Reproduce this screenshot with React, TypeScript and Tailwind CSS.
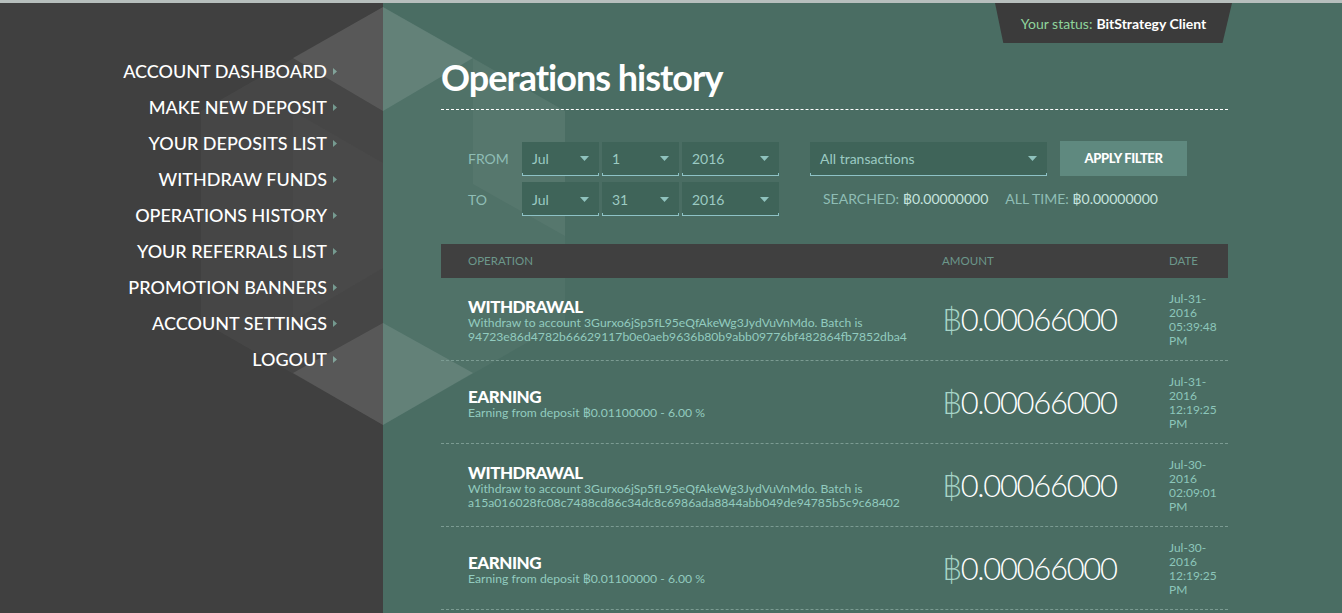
import React from 'react';

const navItems = [
  'ACCOUNT DASHBOARD',
  'MAKE NEW DEPOSIT',
  'YOUR DEPOSITS LIST',
  'WITHDRAW FUNDS',
  'OPERATIONS HISTORY',
  'YOUR REFERRALS LIST',
  'PROMOTION BANNERS',
  'ACCOUNT SETTINGS',
  'LOGOUT',
];

interface Operation {
  type: string;
  description: string;
  amount: string;
  date: string;
}

const operations: Operation[] = [
  {
    type: 'WITHDRAWAL',
    description:
      'Withdraw to account 3Gurxo6jSp5fL95eQfAkeWg3JydVuVnMdo. Batch is 94723e86d4782b66629117b0e0aeb9636b80b9abb09776bf482864fb7852dba4',
    amount: '0.00066000',
    date: 'Jul-31-2016 05:39:48 PM',
  },
  {
    type: 'EARNING',
    description: 'Earning from deposit ฿0.01100000 - 6.00 %',
    amount: '0.00066000',
    date: 'Jul-31-2016 12:19:25 PM',
  },
  {
    type: 'WITHDRAWAL',
    description:
      'Withdraw to account 3Gurxo6jSp5fL95eQfAkeWg3JydVuVnMdo. Batch is a15a016028fc08c7488cd86c34dc8c6986ada8844abb049de94785b5c9c68402',
    amount: '0.00066000',
    date: 'Jul-30-2016 02:09:01 PM',
  },
  {
    type: 'EARNING',
    description: 'Earning from deposit ฿0.01100000 - 6.00 %',
    amount: '0.00066000',
    date: 'Jul-30-2016 12:19:25 PM',
  },
];

const Caret = () => (
  <svg width="9" height="5" viewBox="0 0 9 5" className="shrink-0">
    <path d="M0 0h9L4.5 5z" fill="#8fc2bd" />
  </svg>
);

const Select = ({ value, width }: { value: string; width: string }) => (
  <div className={`relative h-[34px] ${width} bg-[#3f6459] flex items-center justify-between pl-[10px] pr-[10px]`}>
    <span className="text-[14px] text-[#9ccbc3]">{value}</span>
    <Caret />
    {/* underline with end ticks */}
    <span className="absolute bottom-0 inset-x-0 h-[3px] border-x border-b border-[#8ec2c6]" />
  </div>
);

const Arrow = () => (
  <svg width="4" height="7" viewBox="0 0 4 7">
    <path d="M0 0l4 3.5L0 7z" fill="#6f968b" />
  </svg>
);

// background hexagon decoration
const HexPattern = () => (
  <svg className="absolute left-0 top-[3px] pointer-events-none" width="1342" height="610" viewBox="0 0 1342 610">
    <polygon points="383,1 565,105 565,315 383,419 201,315 201,105" fill="#fff" fillOpacity="0.035" />
    <polygon points="293,105 383,157 383,262 293,315" fill="#fff" fillOpacity="0.02" />
    <polygon points="473,52 565,105 565,230 473,178" fill="#fff" fillOpacity="0.04" />
    <polygon points="383,1 293,52 383,105" fill="#fff" fillOpacity="0.1" />
    <polygon points="383,1 473,52 383,105" fill="#fff" fillOpacity="0.11" />
    <polygon points="383,317 293,367 383,419" fill="#fff" fillOpacity="0.1" />
    <polygon points="383,317 473,367 383,419" fill="#fff" fillOpacity="0.11" />
  </svg>
);

export default function App() {
  return (
    <div className="relative h-[613px] overflow-hidden flex bg-[#4a6d63] border-t-[3px] border-[#b7bfbd] font-['Lato',sans-serif]">
      <aside className="w-[383px] shrink-0 bg-[#404040] pt-[50px] pr-[46px]">
        <ul className="flex flex-col items-end">
          {navItems.map((item) => (
            <li key={item} className="h-[36px] flex items-center gap-[6px]">
              <span className="text-[18px] font-medium text-white">{item}</span>
              <Arrow />
            </li>
          ))}
        </ul>
      </aside>

      <HexPattern />

      <main className="relative flex-1 pl-[58px]">
        {/* Status badge */}
        <div className="absolute top-0 right-[110px] w-[237px] h-[40px] bg-[#3b3b3b] [clip-path:polygon(0_0,100%_0,96%_100%,3.5%_100%)] flex items-center justify-center text-[14px]">
          <span className="text-[#8fd49c] mr-[4px]">Your status:</span>
          <span className="text-white font-bold">BitStrategy Client</span>
        </div>

        <div className="w-[787px]">
          <h1 className="pt-[52px] pb-[10px] text-[36px] leading-[44px] font-bold text-white tracking-[-1px] border-b border-dashed border-white">
            Operations history
          </h1>

          {/* Filter */}
          <div className="mt-[31px] pl-[27px]">
            <div className="flex items-center">
              <span className="w-[54px] text-[14px] text-[#8fbdb5]">FROM</span>
              <div className="flex gap-[3px]">
                <Select value="Jul" width="w-[77px]" />
                <Select value="1" width="w-[77px]" />
                <Select value="2016" width="w-[97px]" />
              </div>
              <div className="ml-[31px]">
                <Select value="All transactions" width="w-[237px]" />
              </div>
              <button className="ml-[13px] w-[127px] h-[35px] bg-[#5f897f] text-white text-[13px] font-black tracking-[-0.4px]">
                APPLY FILTER
              </button>
            </div>
            <div className="flex items-center mt-[6px]">
              <span className="w-[54px] text-[14px] text-[#8fbdb5]">TO</span>
              <div className="flex gap-[3px]">
                <Select value="Jul" width="w-[77px]" />
                <Select value="31" width="w-[77px]" />
                <Select value="2016" width="w-[97px]" />
              </div>
              <div className="ml-[44px] -mt-[2px] text-[14px] text-[#8fbdb5]">
                SEARCHED: <span className="text-[#c6e4df]">฿0.00000000</span>
                <span className="ml-[17px]">ALL TIME: </span>
                <span className="text-[#c6e4df]">฿0.00000000</span>
              </div>
            </div>
          </div>

          {/* Table */}
          <div className="mt-[28px]">
            <div className="h-[34px] bg-[#404040] flex items-center text-[11.5px] text-[#6c978b]">
              <div className="w-[474px] pl-[27px]">OPERATION</div>
              <div className="w-[227px] pl-[27px]">AMOUNT</div>
              <div className="flex-1 pl-[27px]">DATE</div>
            </div>
            {operations.map((op, i) => (
              <div key={i} className="h-[83px] flex items-center border-b border-dashed border-[#7b9b92]">
                <div className="w-[474px] pl-[27px] pr-[8px] pt-[3px]">
                  <div className="text-[17px] leading-[18px] font-black text-white tracking-[-0.5px]">{op.type}</div>
                  <div className="text-[12.2px] leading-[14px] text-[#92cbbf] break-words">{op.description}</div>
                </div>
                <div className="w-[227px] pl-[27px] text-[31px] font-light text-white leading-none tracking-[-1.3px]">
                  <span className="text-[#a7d5c8]">฿</span>
                  {op.amount}
                </div>
                <div className="w-[86px] pl-[27px] pr-[2px] pt-[1px] text-[12px] leading-[14px] text-[#8cc6ba]">{op.date}</div>
              </div>
            ))}
          </div>
        </div>
      </main>
    </div>
  );
}
